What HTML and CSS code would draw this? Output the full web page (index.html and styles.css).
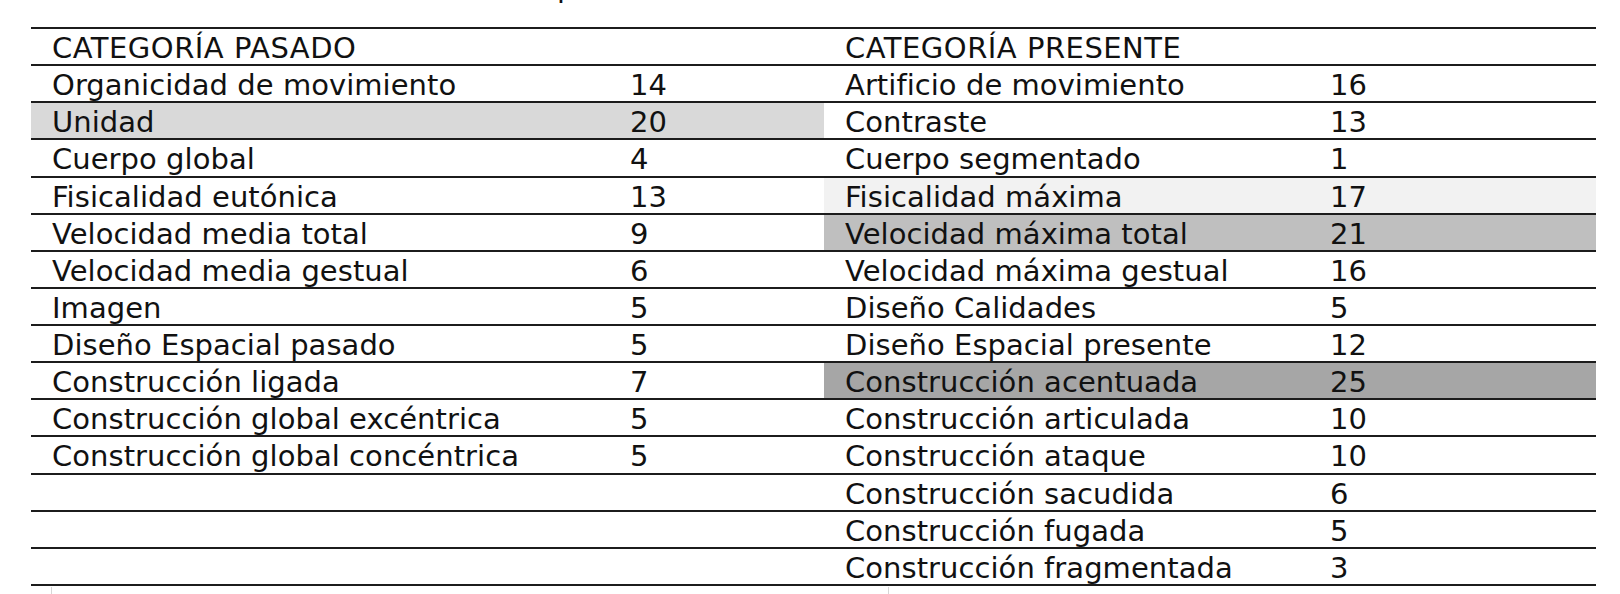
FILE: index.html
```html
<!DOCTYPE html>
<html lang="es">
<head>
<meta charset="utf-8">
<title>Categorías</title>
<link rel="stylesheet" href="styles.css">
</head>
<body>
<div class="title"><span class="title-text">p</span></div>
<div class="table">
  <div class="row head">
    <div class="cell">CATEGORÍA PASADO</div><div class="cell"></div>
    <div class="cell">CATEGORÍA PRESENTE</div><div class="cell"></div>
  </div>
  <div class="row">
    <div class="cell">Organicidad de movimiento</div><div class="cell">14</div>
    <div class="cell">Artificio de movimiento</div><div class="cell">16</div>
  </div>
  <div class="row">
    <div class="cell shade-d9">Unidad</div><div class="cell shade-d9">20</div>
    <div class="cell">Contraste</div><div class="cell">13</div>
  </div>
  <div class="row">
    <div class="cell">Cuerpo global</div><div class="cell">4</div>
    <div class="cell">Cuerpo segmentado</div><div class="cell">1</div>
  </div>
  <div class="row">
    <div class="cell">Fisicalidad eutónica</div><div class="cell">13</div>
    <div class="cell shade-f2">Fisicalidad máxima</div><div class="cell shade-f2">17</div>
  </div>
  <div class="row">
    <div class="cell">Velocidad media total</div><div class="cell">9</div>
    <div class="cell shade-bf">Velocidad máxima total</div><div class="cell shade-bf">21</div>
  </div>
  <div class="row">
    <div class="cell">Velocidad media gestual</div><div class="cell">6</div>
    <div class="cell">Velocidad máxima gestual</div><div class="cell">16</div>
  </div>
  <div class="row">
    <div class="cell">Imagen</div><div class="cell">5</div>
    <div class="cell">Diseño Calidades</div><div class="cell">5</div>
  </div>
  <div class="row">
    <div class="cell">Diseño Espacial pasado</div><div class="cell">5</div>
    <div class="cell">Diseño Espacial presente</div><div class="cell">12</div>
  </div>
  <div class="row">
    <div class="cell">Construcción ligada</div><div class="cell">7</div>
    <div class="cell shade-a6">Construcción acentuada</div><div class="cell shade-a6">25</div>
  </div>
  <div class="row">
    <div class="cell">Construcción global excéntrica</div><div class="cell">5</div>
    <div class="cell">Construcción articulada</div><div class="cell">10</div>
  </div>
  <div class="row">
    <div class="cell">Construcción global concéntrica</div><div class="cell">5</div>
    <div class="cell">Construcción ataque</div><div class="cell">10</div>
  </div>
  <div class="row">
    <div class="cell"></div><div class="cell"></div>
    <div class="cell">Construcción sacudida</div><div class="cell">6</div>
  </div>
  <div class="row">
    <div class="cell"></div><div class="cell"></div>
    <div class="cell">Construcción fugada</div><div class="cell">5</div>
  </div>
  <div class="row">
    <div class="cell"></div><div class="cell"></div>
    <div class="cell">Construcción fragmentada</div><div class="cell">3</div>
  </div>
</div>
<div class="marks"></div>
</body>
</html>
```

FILE: styles.css
```css
html, body {
  margin: 0;
  padding: 0;
  background: #ffffff;
}

body {
  font-family: "DejaVu Sans", Verdana, sans-serif;
  font-size: 29px;
  color: #111111;
  overflow: hidden;
}

.title {
  height: 27px;
  overflow: hidden;
  padding-left: 557px;
  line-height: 28px;
}

.title-text {
  display: block;
  margin-top: -27px;
}

.table {
  margin-left: 31px;
  width: 1565px;
  border-top: 2px solid #1c1c1c;
}

.row {
  display: grid;
  grid-template-columns: 578px 215px 485px 287px;
  height: 35.14px;
  border-bottom: 2px solid #1c1c1c;
}

.cell {
  padding: 3px 0 0 21px;
  line-height: 32px;
  white-space: nowrap;
  letter-spacing: 0.05px;
}

.head .cell {
  letter-spacing: 0.5px;
}

.shade-d9 { background: #d9d9d9; }
.shade-f2 { background: #f2f2f2; }
.shade-bf { background: #bfbfbf; }
.shade-a6 { background: #a6a6a6; }

.marks {
  margin-left: 51px;
  margin-top: 1px;
  width: 836px;
  height: 12px;
  border-left: 1px solid #d6d6d6;
  border-right: 1px solid #d6d6d6;
}
```
